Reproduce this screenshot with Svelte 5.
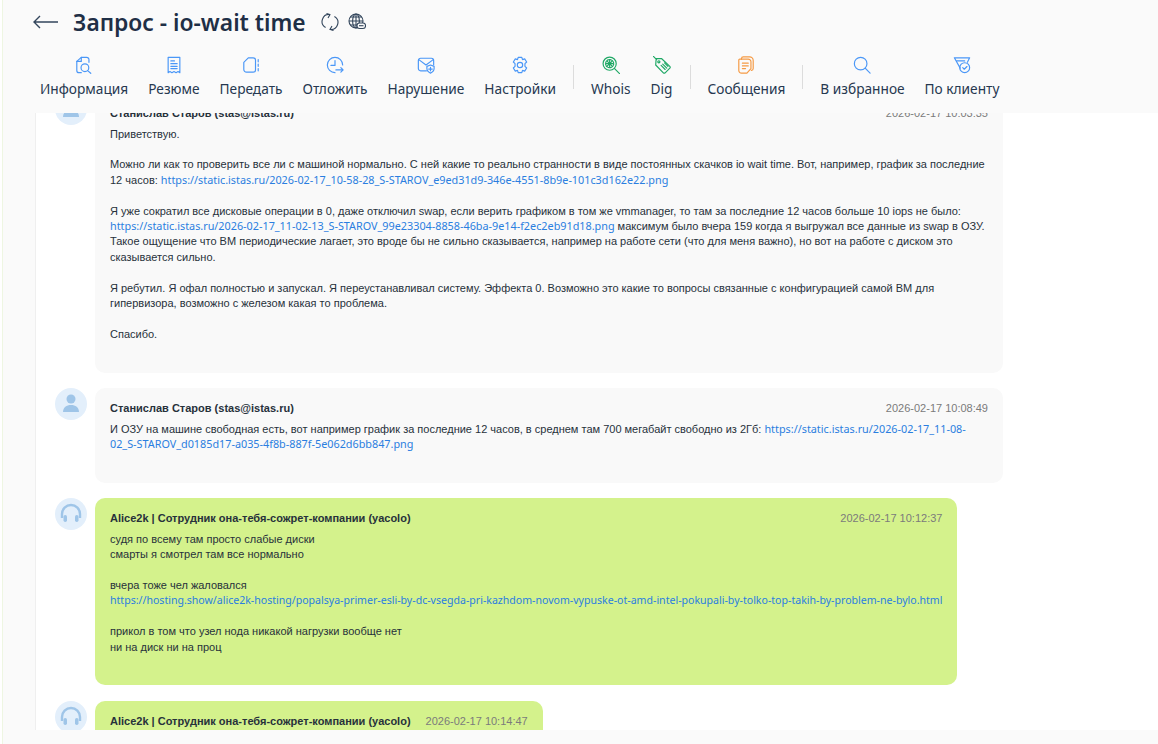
<script lang="ts">
    const tools = [
        { label: 'Информация', icon: 'info' },
        { label: 'Резюме', icon: 'resume' },
        { label: 'Передать', icon: 'transfer' },
        { label: 'Отложить', icon: 'delay' },
        { label: 'Нарушение', icon: 'abuse' },
        { label: 'Настройки', icon: 'gear' },
        { sep: true },
        { label: 'Whois', icon: 'whois', color: 'green' },
        { label: 'Dig', icon: 'dig', color: 'green' },
        { sep: true },
        { label: 'Сообщения', icon: 'msgs', color: 'orange' },
        { sep: true },
        { label: 'В избранное', icon: 'search' },
        { label: 'По клиенту', icon: 'filter' }
    ];
</script>

<div class="page">
    <header class="top">
        <div class="title-row">
            <svg class="back" viewBox="0 0 26 14"><path d="M1 7h24M7 1 1 7l6 6" /></svg>
            <h1>Запрос - io-wait time</h1>
            <svg class="mini" viewBox="0 0 18 18"><path d="M4.600 14.500A7 7 0 0 1 9 1.500M5.500.500 9 1.500 7 5" /><path d="M13.400 3.500A7 7 0 0 1 9 16.500M12.500 17.500 9 16.500 11 13" /></svg>
            <svg class="mini" viewBox="0 0 18 18"><circle cx="8" cy="8" r="7" /><path d="M1 8h14M8 1v14M2.500 4h11M2.500 12h11" /><ellipse cx="8" cy="8" rx="3.400" ry="7" /><rect class="fill-bg" x="9" y="10" width="8.500" height="5.500" rx="2.500" /><path d="M11 12.700h4.500" /></svg>
        </div>
        <nav class="tools">
            {#each tools as t}
                {#if t.sep}
                    <span class="sep"></span>
                {:else}
                    <button type="button" class="tool">
                        <svg class="ico {t.color ?? 'blue'}" viewBox="0 0 20 20">
                            {#if t.icon === 'info'}
                                <path d="M7 18.500H4.500A2.500 2.500 0 0 1 2 16V6l5-4.500h6a2.500 2.500 0 0 1 2.500 2.500v3" /><path d="M7 1.500V6H2" /><circle cx="11" cy="13" r="4.300" /><path d="m14 16.200 3.500 3" />
                            {:else if t.icon === 'resume'}
                                <path d="M3.500 1.500h13v17l-2-1.300-2.200 1.300-2.300-1.300-2.300 1.300-2.200-1.300-2 1.300z" /><path d="M6.500 5.500h4M6.500 8.500h7M6.500 11.500h7M6.500 14h7" />
                            {:else if t.icon === 'transfer'}
                                <path d="M7 2h5.500A2.500 2.500 0 0 1 15 4.500v11a2.500 2.500 0 0 1-2.500 2.500H5a3 3 0 0 1-3-3V7z" /><path d="M18 4v2.500M18 9v2.500M18 14v2.500" />
                            {:else if t.icon === 'delay'}
                                <path d="M10 18.500a8.500 8.500 0 1 1 8.500-8.500" /><path d="M10 5v5.500H5.500" /><path d="M11 15.500h8M16.500 13l2.500 2.500-2.500 2.500" />
                            {:else if t.icon === 'abuse'}
                                <path d="M10.500 16.500H4A2.500 2.500 0 0 1 1.500 14V5A2.500 2.500 0 0 1 4 2.500h12A2.500 2.500 0 0 1 18.500 5v5" /><path d="m2 4 8 6 8-6" /><path d="M11 11.500 15 10l4 1.500V14c0 2.500-1.800 4-4 5-2.200-1-4-2.500-4-5zM15 12.500v4M13 14.500h4" />
                            {:else if t.icon === 'gear'}
                                <path d="M8 1.500h4l.8 2.500 2.400-.8 2.200 3.500-1.900 1.800v3l1.900 1.800-2.200 3.500-2.400-.8-.8 2.500H8l-.8-2.500-2.400.8-2.200-3.500 1.900-1.800v-3L2.600 6.700l2.200-3.500 2.400.8z" /><circle cx="10" cy="10" r="3" />
                            {:else if t.icon === 'whois'}
                                <circle cx="8.500" cy="8.500" r="7.300" /><circle cx="8.500" cy="8.500" r="4.500" stroke-dasharray="1.500 1" /><path d="M4.500 8.500h8M8.500 4.500v8M5.700 5.700l5.600 5.600M11.300 5.700l-5.600 5.600" /><path d="m14 14 5.500 5.500" />
                            {:else if t.icon === 'dig'}
                                <path d="M.5.500 4 4M3.500 3h6.200l9 8.500a1.500 1.500 0 0 1 0 2l-5.200 5.200a1.500 1.500 0 0 1-2 0L3 10z" /><circle cx="6.500" cy="6.500" r="1.200" /><path d="m9 10.500 4.500 4.500M10.800 9l4.500 4.500M12.800 7.600l3.800 3.800" />
                            {:else if t.icon === 'msgs'}
                                <path d="M5 3.500V3A2 2 0 0 1 7 1h7a4 4 0 0 1 4 4v9a2 2 0 0 1-2 2" /><path d="M3 3.500h9.500a3 3 0 0 1 3 3V14l-4.500 5H5a3 3 0 0 1-3-3V4.500a1 1 0 0 1 1-1z" /><path d="M6 8h6.500M6 11h6.500M6 14h3.500" />
                            {:else if t.icon === 'search'}
                                <circle cx="8.500" cy="8.500" r="7" /><path d="m13.500 13.500 5.500 5.500" />
                            {:else if t.icon === 'filter'}
                                <path d="M8 13.500 1.500 2h17l-2.500 5" /><path d="M4 5.500h9" /><circle cx="13" cy="13" r="5.500" /><path d="m10.800 13 1.700 1.700 3-3" />
                            {/if}
                        </svg>
                        <span>{t.label}</span>
                    </button>
                {/if}
            {/each}
        </nav>
    </header>

    <main class="panel">
        <div class="feed">
            <article class="msg">
                <div class="avatar">
                    <svg viewBox="0 0 32 32"><circle cx="16" cy="11" r="4.500" /><path d="M8 24c0-4.500 3.500-7 8-7s8 2.500 8 7z" /></svg>
                </div>
                <div class="card">
                    <div class="head"><b>Станислав Старов (stas@istas.ru)</b><time>2026-02-17 10:03:35</time></div>
                    <div class="body">Приветствую.<br><br>Можно ли как то проверить все ли с машиной нормально. С ней какие то реально странности в виде постоянных скачков io wait time. Вот, например, график за последние 12 часов: <a href="#a">https://static.istas.ru/2026-02-17_10-58-28_S-STAROV_e9ed31d9-346e-4551-8b9e-101c3d162e22.png</a><br><br>Я уже сократил все дисковые операции в 0, даже отключил swap, если верить графиком в том же vmmanager, то там за последние 12 часов больше 10 iops не было: <a href="#a">https://static.istas.ru/2026-02-17_11-02-13_S-STAROV_99e23304-8858-46ba-9e14-f2ec2eb91d18.png</a> максимум было вчера 159 когда я выгружал все данные из swap в ОЗУ. Такое ощущение что ВМ периодические лагает, это вроде бы не сильно сказывается, например на работе сети (что для меня важно), но вот на работе с диском это сказывается сильно.<br><br>Я ребутил. Я офал полностью и запускал. Я переустанавливал систему. Эффекта 0. Возможно это какие то вопросы связанные с конфигурацией самой ВМ для гипервизора, возможно с железом какая то проблема.<br><br>Спасибо.<br><br></div>
                </div>
            </article>

            <article class="msg">
                <div class="avatar">
                    <svg viewBox="0 0 32 32"><circle cx="16" cy="11" r="4.500" /><path d="M8 24c0-4.500 3.500-7 8-7s8 2.500 8 7z" /></svg>
                </div>
                <div class="card">
                    <div class="head"><b>Станислав Старов (stas@istas.ru)</b><time>2026-02-17 10:08:49</time></div>
                    <div class="body">И ОЗУ на машине свободная есть, вот например график за последние 12 часов, в среднем там 700 мегабайт свободно из 2Гб: <a href="#a">https://static.istas.ru/2026-02-17_11-08-02_S-STAROV_d0185d17-a035-4f8b-887f-5e062d6bb847.png</a><br><br></div>
                </div>
            </article>

            <article class="msg">
                <div class="avatar">
                    <svg class="phones" viewBox="0 0 32 32"><path d="M7 20v-4a9 9 0 0 1 18 0v4" /><rect x="8.500" y="17" width="3.500" height="7" rx="1.700" /><rect x="20" y="17" width="3.500" height="7" rx="1.700" /></svg>
                </div>
                <div class="card staff">
                    <div class="head"><b>Alice2k | Сотрудник она-тебя-сожрет-компании (yacolo)</b><time>2026-02-17 10:12:37</time></div>
                    <div class="body">судя по всему там просто слабые диски<br>смарты я смотрел там все нормально<br><br>вчера тоже чел жаловался<br><a href="#a">https://hosting.show/alice2k-hosting/popalsya-primer-esli-by-dc-vsegda-pri-kazhdom-novom-vypuske-ot-amd-intel-pokupali-by-tolko-top-takih-by-problem-ne-bylo.html</a><br><br>прикол в том что узел нода никакой нагрузки вообще нет<br>ни на диск ни на проц<br><br></div>
                </div>
            </article>

            <article class="msg">
                <div class="avatar">
                    <svg class="phones" viewBox="0 0 32 32"><path d="M7 20v-4a9 9 0 0 1 18 0v4" /><rect x="8.500" y="17" width="3.500" height="7" rx="1.700" /><rect x="20" y="17" width="3.500" height="7" rx="1.700" /></svg>
                </div>
                <div class="card staff">
                    <div class="head"><b>Alice2k | Сотрудник она-тебя-сожрет-компании (yacolo)</b><time>2026-02-17 10:14:47</time></div>
                </div>
            </article>
        </div>
    </main>
</div>

<style>
    :global(body) {
        margin: 0;
        background: #fff;
        font-family: "Noto Sans", sans-serif;
        overflow: hidden;
    }

    .page {
        height: 744px;
        box-sizing: border-box;
        margin-left: 2px;
        padding-left: 1px;
        display: flex;
        flex-direction: column;
        overflow: hidden;
        background: #fafafa;
        border-left: 1px solid #eef6e2;
    }

    .top {
        height: 113px;
        flex: none;
        padding-left: 29px;
        box-sizing: border-box;
    }

    .title-row {
        display: flex;
        align-items: center;
        height: 44px;
    }

    .back {
        width: 26px;
        height: 14px;
        fill: none;
        stroke: #33465c;
        stroke-width: 1.4;
        margin-right: 14px;
    }

    h1 {
        margin: 0 15px 0 0;
        font-size: 22.8px;
        font-weight: 600;
        color: #1f2f46;
        white-space: nowrap;
    }

    .mini {
        width: 18px;
        height: 18px;
        margin-right: 9px;
        fill: none;
        stroke: #33465c;
        stroke-width: 1.1;
    }

    .fill-bg {
        fill: #fafafa;
    }

    .tools {
        display: flex;
        align-items: flex-start;
        gap: 20px;
        padding: 12px 0 0 7px;
    }

    .tool {
        display: flex;
        flex-direction: column;
        align-items: center;
        gap: 5px;
        padding: 0;
        border: 0;
        background: none;
        font: inherit;
        font-size: 13.7px;
        line-height: 20px;
        color: #263850;
        white-space: nowrap;
    }

    .ico {
        width: 18px;
        height: 18px;
        fill: none;
        stroke-width: 1.3;
        stroke-linecap: round;
        stroke-linejoin: round;
    }

    .blue { stroke: #4a97f7; }
    .green { stroke: #1fa865; }
    .orange { stroke: #f59a44; }

    .sep {
        width: 1px;
        height: 24px;
        margin: 9px -3px 0;
        background: #dcdcdc;
    }

    .panel {
        flex: none;
        height: 617px;
        margin-left: 31px;
        background: #fff;
        border-left: 1px solid #efefef;
        overflow: hidden;
    }

    .feed {
        margin-top: -20px;
        padding-left: 19px;
        display: flex;
        flex-direction: column;
        gap: 15.5px;
    }

    .msg {
        display: flex;
        align-items: flex-start;
        gap: 8px;
    }

    .avatar {
        width: 32px;
        height: 32px;
        flex: none;
        border-radius: 50%;
        background: #e3effb;
    }

    .avatar svg {
        display: block;
        fill: #9fc5e8;
    }

    .avatar .phones path {
        fill: none;
        stroke: #9fc5e8;
        stroke-width: 2.4;
    }

    .card {
        box-sizing: border-box;
        width: fit-content;
        max-width: 908px;
        padding: 15.5px 15px 15px;
        background: #f9f9f9;
        border-radius: 10px;
        font-family: "Liberation Sans", Arial, sans-serif;
        font-size: 11px;
        line-height: 15.4px;
        color: #27313b;
    }

    .card.staff {
        background: #d4f28c;
    }

    .head {
        display: flex;
        justify-content: space-between;
        gap: 15px;
        align-items: center;
        height: 10px;
        margin-bottom: 8px;
    }

    .head b {
        white-space: nowrap;
    }

    time {
        color: #7b7b7b;
        white-space: nowrap;
    }

    .body a {
        color: #2a7ee0;
        text-decoration: none;
        font-family: "Noto Sans", sans-serif;
        font-size: 10.82px;
        line-height: 1;
    }

    .staff .body a {
        font-size: 10.57px;
    }
</style>
